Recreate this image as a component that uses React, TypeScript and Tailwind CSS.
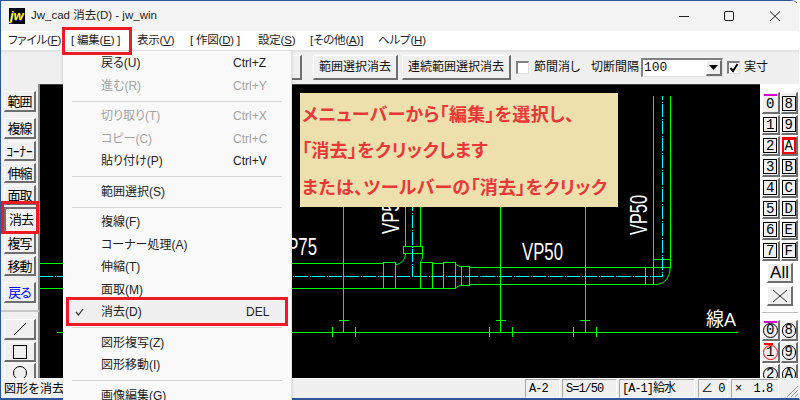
const raised =
  "border-t border-l border-t-white border-l-white border-r-2 border-b-2 border-r-[#6e6e6e] border-b-[#6e6e6e] bg-[#f0f0f0]";
const sunken =
  "border-t-2 border-l-2 border-t-[#808080] border-l-[#808080] border-r border-b border-r-[#e0e0e0] border-b-[#e0e0e0]";
const field =
  "border-t border-l border-t-[#a8a8a8] border-l-[#a8a8a8] border-r border-b border-r-white border-b-white flex items-center overflow-hidden whitespace-pre";

function Key({ k, children }: { k: string; children: string }) {
  return (
    <span>
      {children}(<span className="underline">{k}</span>)
    </span>
  );
}

function Menubar() {
  return (
    <div className="h-[19px] bg-white flex items-center text-[11.5px] tracking-[-0.2px] text-[#222]">
      <div className="ml-[7px] w-[63px]"><Key k="F">ファイル</Key></div>
      <div className="w-[66px]">[ <Key k="E">編集</Key> ]</div>
      <div className="w-[53px]"><Key k="V">表示</Key></div>
      <div className="w-[68px]">[ <Key k="D">作図</Key> ]</div>
      <div className="w-[52px]"><Key k="S">設定</Key></div>
      <div className="w-[68px]">[<Key k="A">その他</Key>]</div>
      <div><Key k="H">ヘルプ</Key></div>
    </div>
  );
}

function Toolbar() {
  return (
    <div className="h-[34px] bg-[#f0f0f0] border-t-2 border-t-[#e4e4e4] flex items-center text-[12px] text-[#111] pb-[2px]">
      <button className={`${raised} ml-[200px] w-[101px] h-[25px]`}></button>
      <button className={`${raised} ml-[11px] w-[85px] h-[25px]`}>範囲選択消去</button>
      <button className={`${raised} ml-[4px] w-[109px] h-[25px]`}>連続範囲選択消去</button>
      <span className={`${sunken} ml-[5px] w-[13px] h-[13px] bg-white`}></span>
      <span className="ml-[5px] w-[57px]">節間消し</span>
      <span className="w-[50px]">切断間隔</span>
      <div className={`${sunken} w-[82px] h-[19px] bg-white flex items-center justify-between`}>
        <span className="ml-[1px] font-['Liberation_Mono',monospace] text-[13px]">100</span>
        <span className={`${raised} w-[16px] h-full flex items-center justify-center`}>
          <svg width="9" height="5" viewBox="0 0 9 5"><path d="M0 0h9L4.5 5z" fill="#000" /></svg>
        </span>
      </div>
      <span className={`${sunken} ml-[4px] w-[13px] h-[13px] bg-white flex items-center justify-center`}>
        <svg width="10" height="10" viewBox="0 0 10 10"><path d="M1.5 5l2.5 3 4.5-7" stroke="#000" strokeWidth="2" fill="none" /></svg>
      </span>
      <span className="ml-[4px]">実寸</span>
    </div>
  );
}

const tools: { label: string; h: string; mt?: string; extra?: string }[] = [
  { label: "範囲", h: "h-[21px]" },
  { label: "複線", h: "h-[21px]", mt: "mt-[6px]" },
  { label: "ｺｰﾅｰ", h: "h-[20px]", mt: "mt-[2px]", extra: "tracking-normal" },
  { label: "伸縮", h: "h-[20px]", mt: "mt-[2px]" },
  { label: "面取", h: "h-[20px]", mt: "mt-[2px]" },
];

function LeftBar() {
  return (
    <div className="w-[39px] shrink-0 bg-[#f0f0f0] border-r-2 border-r-[#8a8a8a] pt-[7px] pl-[3px] pr-[2px] flex flex-col text-[13px] tracking-[-1px] text-black">
      {tools.map((t) => (
        <button key={t.label} className={`${raised} ${t.h} ${t.mt ?? ""} ${t.extra ?? ""} shrink-0`}>{t.label}</button>
      ))}
      <button className="mt-[2px] h-[24px] shrink-0 border-t-2 border-l-2 border-t-[#6e6e6e] border-l-[#6e6e6e] bg-[repeating-conic-gradient(#fff_0_25%,#ececec_0_50%)] bg-[length:2px_2px]">消去</button>
      <button className={`${raised} mt-[2px] h-[21px] shrink-0`}>複写</button>
      <button className={`${raised} mt-[2px] h-[20px] shrink-0`}>移動</button>
      <button className={`${raised} mt-[6px] h-[21px] shrink-0 text-[#0000ff]`}>戻る</button>
      <div className="mt-[7px] -mx-[3px] h-[2px] shrink-0 bg-[#c8c8c8]"></div>
      <button className={`${raised} mt-[7px] h-[21px] shrink-0 flex items-center justify-center`}>
        <svg width="14" height="14" viewBox="0 0 14 14"><path d="M1 13L13 1" stroke="#000" /></svg>
      </button>
      <button className={`${raised} mt-[2px] h-[20px] shrink-0 flex items-center justify-center`}>
        <span className="w-[14px] h-[14px] border border-black"></span>
      </button>
      <button className={`${raised} mt-[1px] h-[20px] shrink-0 flex items-start justify-center pt-[2px]`}>
        <span className="w-[14px] h-[14px] border border-black rounded-full"></span>
      </button>
    </div>
  );
}

function Drawing() {
  const g = "#00ff00";
  const c = "#00ffff";
  const label = "font-['Liberation_Sans',sans-serif]";
  return (
    <svg className="w-full h-full block" viewBox="40 85 720 293" fill="none" stroke={g} shapeRendering="crispEdges">
      {/* supports */}
      <path d="M343.5 96V332M500.5 96V332M585.5 96V332" />
      <path d="M339 320.5H349M496 320.5H506M580 320.5H590" />
      <path d="M332.5 327V337M355.5 327V337M489.5 327V337M512.5 327V337M573.5 327V337M596.5 327V337" />
      <path d="M57 332.5H738" />
      {/* 75 pipe with tee */}
      <path d="M40 263.5H383M40 288.5H383M395 288.5H420M432 263.5H443M432 288.5H443" />
      <path d="M405.5 96V246M420.5 96V246" />
      <path d="M383.5 262.5h12v26h-12zM420.5 262.5h12v26h-12zM443.5 262.5h12v26h-12zM461.5 266.5h8v19h-8zM403.5 246.5h19v7h-19z" />
      <path d="M395 265Q405 263 405.5 254M420.5 262Q423 260 422.5 254M455 264L461 267M455 288L461 285" shapeRendering="auto" />
      {/* 50 pipe and elbow */}
      <path d="M469 267.5H653M469 284.5H645M645.5 267V284M653.5 96V284M670.5 96V266M653 259.5H670M653 267.5H670M645 284.5H657" />
      <path d="M657 284.5Q670 283 670.5 266" shapeRendering="auto" />
      {/* center lines */}
      <path d="M40 276.5H662.5V96M412.5 96V276" stroke={c} strokeDasharray="13 1.5 1 1.5" />
      {/* labels */}
      <g fill="#fff" stroke="none" shapeRendering="auto">
        <text className={label} x="276" y="255" fontSize="23" textLength="41" lengthAdjust="spacingAndGlyphs">VP75</text>
        <text className={label} x="522" y="260" fontSize="23" textLength="41" lengthAdjust="spacingAndGlyphs">VP50</text>
        <text className={label} transform="translate(399 234) rotate(-90)" fontSize="23" textLength="41" lengthAdjust="spacingAndGlyphs">VP50</text>
        <text className={label} transform="translate(647 235) rotate(-90)" fontSize="23" textLength="40" lengthAdjust="spacingAndGlyphs">VP50</text>
        <text x="706" y="326" fontSize="19" textLength="30" lengthAdjust="spacingAndGlyphs">線A</text>
      </g>
    </svg>
  );
}

function LayerBtn({ v, mark, plain, tall }: { v: string; mark?: boolean; plain?: boolean; tall?: boolean }) {
  return (
    <div className={`${raised} relative ${tall ? "h-[22px] pt-[2px]" : "h-[20px]"} flex items-center justify-center font-['Liberation_Mono',monospace] text-[14px] leading-none text-black`}>
      {mark && <span className="absolute top-[1px] left-[1px] right-[1px] h-[2px] bg-[#d400d4]"></span>}
      <span className={`w-[14px] h-[15px] flex items-center justify-center border ${plain ? "border-transparent" : "border-black"}`}>{v}</span>
    </div>
  );
}

function RedLayerBtn() {
  return (
    <div className={`${raised} h-[20px] flex items-center justify-center font-['Liberation_Mono',monospace] text-[14px] leading-none text-black`}>
      <span className="w-[15px] h-[17px] flex items-center justify-center bg-white border-2 border-t-[3px] border-[#ff0000]">A</span>
    </div>
  );
}

function RingBtn({ v, mark, red }: { v: string; mark?: string; red?: boolean }) {
  return (
    <div className={`${raised} relative h-[21px] flex items-center justify-center font-['Liberation_Mono',monospace] text-[14px] leading-none text-black`}>
      {mark && <span className={`absolute top-[0px] left-[1px] h-[2px] ${mark}`}></span>}
      <span className={`w-[15px] h-[15px] rounded-full flex items-center justify-center border ${red ? "border-[#ff0000]" : "border-black"}`}>{v}</span>
    </div>
  );
}

function RightBar() {
  const rows = ["1", "9", "2", "A", "3", "B", "4", "C", "5", "D", "6", "E", "7", "F"];
  return (
    <div className="w-[39px] shrink-0 bg-white pl-[2px] pr-[1px] pt-[8px] flex flex-col overflow-hidden">
      <div className="grid grid-cols-2 gap-[1px] shrink-0">
        <LayerBtn v="0" mark plain tall />
        <LayerBtn v="8" tall />
        {rows.map((v) => (v === "A" ? <RedLayerBtn key={v} /> : <LayerBtn key={v} v={v} />))}
      </div>
      <button className={`${raised} mx-[5px] mt-[2px] h-[20px] shrink-0 font-['Liberation_Sans',sans-serif] text-[17px] leading-none`}>All</button>
      <button className={`${raised} mx-[5px] mt-[3px] h-[20px] shrink-0 flex items-center justify-center`}>
        <svg width="16" height="14" viewBox="0 0 16 14"><path d="M1 1l14 12M15 1L1 13" stroke="#333" /></svg>
      </button>
      <div className="mt-[6px] h-[1px] shrink-0 bg-[#bdbdbd]"></div>
      <div className="mt-[7px] grid grid-cols-2 gap-[1px] shrink-0">
        <RingBtn v="0" mark="right-[1px] bg-[#d400d4]" />
        <RingBtn v="8" />
        <RingBtn v="1" red mark="w-[9px] bg-[#ff0000]" />
        <RingBtn v="9" />
        <RingBtn v="2" />
        <RingBtn v="A" />
      </div>
    </div>
  );
}

function StatusBar() {
  return (
    <div className="relative z-0 h-[20px] bg-[#f0f0f0] border-t border-t-white flex items-stretch text-[12px] text-black">
      <span className="ml-[3px] self-center whitespace-nowrap [font-feature-settings:normal]">図形を消去します</span>
      <div className="ml-auto flex gap-[2px] font-['Liberation_Mono','Noto_Sans_CJK_JP',monospace] text-[12px] tracking-[-1px]">
        <span className={`${field} w-[35px] pl-[3px]`}>A-2</span>
        <span className={`${field} w-[55px] pl-[3px]`}>S=1/50</span>
        <span className={`${field} w-[76px] pl-[2px]`}>[A-1]給水</span>
        <span className={`${field} w-[30px] pl-[2px] ml-[1px]`}>∠ 0</span>
        <span className={`${field} w-[48px] pl-[3px] ml-[1px]`}>×  1.8</span>
      </div>
      <div className="w-[20px] flex items-end justify-end">
        <svg width="13" height="13" viewBox="0 0 13 13"><path d="M12 1L1 12M12 5L5 12M12 9L9 12" stroke="#9a9a9a" /></svg>
      </div>
    </div>
  );
}

type Row = { label?: string; key?: string; off?: boolean; check?: boolean } | null;
const rows: Row[] = [
  { label: "戻る(U)", key: "Ctrl+Z" },
  { label: "進む(R)", key: "Ctrl+Y", off: true },
  null,
  { label: "切り取り(T)", key: "Ctrl+X", off: true },
  { label: "コピー(C)", key: "Ctrl+C", off: true },
  { label: "貼り付け(P)", key: "Ctrl+V" },
  null,
  { label: "範囲選択(S)" },
  null,
  { label: "複線(F)" },
  { label: "コーナー処理(A)" },
  { label: "伸縮(T)" },
  { label: "面取(M)" },
  { label: "消去(D)", key: "DEL", check: true },
  null,
  { label: "図形複写(Z)" },
  { label: "図形移動(I)" },
  null,
  { label: "画像編集(G)" },
];

function EditMenu() {
  return (
    <div className="absolute z-10 left-[63px] top-[51px] w-[229px] h-[349px] overflow-hidden bg-[#f9f9f9] border-r border-r-[#e2e2e2] rounded-tl-[4px] pt-px text-[12px] text-[#222] shadow-[0_1px_3px_rgba(0,0,0,0.2)]">
      {rows.map((r, i) =>
        r === null ? (
          <div key={i} className="h-[8px] flex items-center px-[9px]"><div className="h-px w-full bg-[#d4d4d4]"></div></div>
        ) : (
          <div key={i} className={`relative h-[22.5px] flex items-center mx-[4px] rounded-[3px] ${r.check ? "bg-[#f0f0f0]" : ""} ${r.off ? "text-[#a3a3a3]" : ""}`}>
            {r.check && (
              <svg className="absolute left-[8px]" width="9" height="8" viewBox="0 0 9 8"><path d="M1 4l2.5 3L8 1" stroke="#333" strokeWidth="1.2" fill="none" /></svg>
            )}
            <span className="ml-[34px]">{r.label}</span>
            {r.key && <span className={`absolute ${r.key === "DEL" ? "left-[179px]" : "left-[166px]"}`}>{r.key}</span>}
          </div>
        ),
      )}
    </div>
  );
}

export default function App() {
  return (
    <div className="relative w-[800px] h-[400px] bg-white overflow-hidden font-['Liberation_Sans','Noto_Sans_CJK_JP',sans-serif] [font-feature-settings:'palt']">
      <div className="h-full flex flex-col border-t border-l border-b-2 border-r border-[#2f5597] border-r-white rounded-tr-[9px] overflow-hidden">
        <div className="h-[30px] shrink-0 bg-[#f3f3f3] flex items-center">
          <svg className="ml-[8px]" width="16" height="16" viewBox="0 0 16 16">
            <rect width="16" height="16" fill="#000" />
            <text x="1.5" y="12.5" fontSize="13" fontWeight="700" fontStyle="italic" fill="#2a2ad0" fontFamily="Liberation Sans">jw</text>
            <text x="1" y="12" fontSize="13" fontWeight="700" fontStyle="italic" fill="#ffff00" fontFamily="Liberation Sans">jw</text>
          </svg>
          <span className="ml-[6px] text-[11.5px] text-[#222]">Jw_cad 消去(D) - jw_win</span>
          <svg className="ml-auto mr-[18px]" width="102" height="12" viewBox="0 0 102 12" fill="none" stroke="#222">
            <path d="M0 6.5H10" />
            <rect x="45.5" y="1.5" width="9" height="9" rx="1.5" />
            <path d="M91 1.5l10 9.5M101 1.5L91 11" />
          </svg>
        </div>
        <Menubar />
        <Toolbar />
        <div className="flex-1 min-h-0 flex">
          <LeftBar />
          <div className="flex-1 min-w-0 bg-black border-t border-t-[#404040]">
            <Drawing />
          </div>
          <RightBar />
        </div>
        <StatusBar />
      </div>

      <EditMenu />

      <div className="absolute z-10 left-[300px] top-[93px] w-[318px] h-[114px] bg-[#eee0ac] pl-[2px] pt-[4px] flex flex-col text-[18px] tracking-[0.3px] font-bold text-[#e93838] whitespace-nowrap">
        <div className="h-[36px] flex items-center">メニューバーから「編集」を選択し、</div>
        <div className="h-[37px] flex items-center">「消去」をクリックします</div>
        <div className="h-[37px] flex items-center">または、ツールバーの「消去」をクリック</div>
      </div>

      <div className="absolute z-20 left-[62px] top-[27px] w-[70px] h-[28px] border-[3px] border-[#ed1c24]"></div>
      <div className="absolute z-20 left-[1px] top-[201px] w-[38px] h-[33px] border-[3px] border-[#ed1c24]"></div>
      <div className="absolute z-20 left-[66px] top-[297px] w-[222px] h-[29px] border-[3px] border-[#ed1c24]"></div>
    </div>
  );
}
